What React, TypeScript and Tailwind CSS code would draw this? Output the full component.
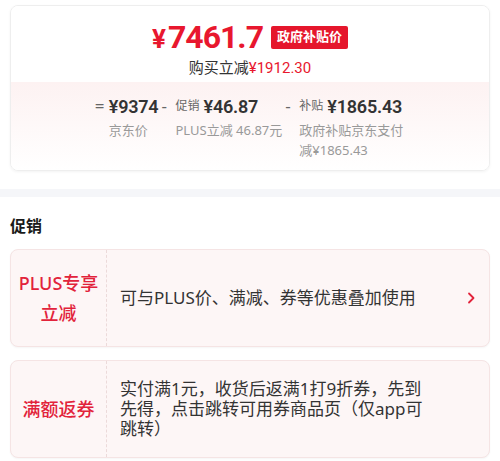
import React from "react";

const cjk = { fontFamily: '"Noto Sans", "Noto Sans CJK SC", sans-serif' };
const num = { fontFamily: 'Roboto, "Noto Sans CJK SC", sans-serif' };

// 价格明细里的一列
const PriceCol = ({ sign, tag, value, label, wide }: { sign: string; tag?: string; value: string; label: string; wide?: boolean }) => (
  <div className="flex items-start">
    <span className="h-[24px] leading-[24px] text-[17px] text-[#666] w-[14px] shrink-0">{sign}</span>
    <div className={wide ? "max-w-[106px]" : ""}>
      <div className="h-[24px] flex items-center whitespace-nowrap">
        {tag && <span className="text-[12px] text-[#666] mr-[4px]">{tag}</span>}
        <span className="text-[18px] font-semibold tracking-[-0.2px] text-[#333]" style={num}>{value}</span>
      </div>
      <div className="text-[13px] leading-[20px] text-[#999] mt-[2px]">{label}</div>
    </div>
  </div>
);

export default function App() {
  return (
    <div className="w-[500px] h-[461px] bg-white overflow-hidden" style={cjk}>
      <div className="px-[10px] pt-[5px]">
        <div className="rounded-lg border border-[#eeeeee] shadow-[0_1px_3px_rgba(0,0,0,0.05)] overflow-hidden">
          <div className="pt-[13px] pb-[5px] flex flex-col items-center bg-white">
            <div className="h-[36px] flex items-center">
              <span className="text-[#e8172e] font-bold leading-none" style={num}>
                <span className="text-[26px] mr-[2px]">¥</span>
                <span className="text-[32px] tracking-[-1px]">7461.7</span>
              </span>
              <span className="ml-[8px] h-[23px] px-[6px] flex items-center bg-[#e5162c] text-white text-[13px] font-bold rounded-[2px]">
                政府补贴价
              </span>
            </div>
            <div className="h-[20px] leading-[20px] mt-[2px] text-[15px] text-[#333]">
              购买立减<span className="text-[#e8172e]" style={num}>¥1912.30</span>
            </div>
          </div>
          <div className="bg-gradient-to-b from-[#fdf2f2] to-white pt-[12px] pb-[10px] flex justify-center gap-[3px]">
            <PriceCol sign="=" value="¥9374" label="京东价" />
            <PriceCol sign="-" tag="促销" value="¥46.87" label="PLUS立减 46.87元" />
            <PriceCol sign="-" tag="补贴" value="¥1865.43" label="政府补贴京东支付减¥1865.43" wide />
          </div>
        </div>
      </div>

      <div className="mt-[18px] h-[8px] bg-[#f5f6f9]" />

      <div className="px-[10px]">
        <h3 className="mt-[17px] h-[24px] leading-[24px] text-[16px] font-bold text-[#1a1a1a]">促销</h3>

        <div className="mt-[11px] flex rounded-lg border border-[#f5e4e4] bg-[#fdf6f6] shadow-[0_1px_2px_rgba(0,0,0,0.04)]">
          <div className="w-[96px] shrink-0 py-[18px] flex items-center justify-center text-center text-[18px] leading-[30px] font-medium text-[#e2233b] border-r border-dashed border-[#ecdada]">
            PLUS专享<br />立减
          </div>
          <div className="flex-1 flex items-center pl-[13px] pr-[14px]">
            <span className="flex-1 text-[17px] text-[#333]">可与PLUS价、满减、券等优惠叠加使用</span>
            <svg width="8" height="12" viewBox="0 0 8 12" className="shrink-0">
              <polyline points="2,1.5 6.5,6 2,10.5" fill="none" stroke="#e2233b" strokeWidth="1.8" strokeLinecap="round" strokeLinejoin="round" />
            </svg>
          </div>
        </div>

        <div className="mt-[13px] flex rounded-lg border border-[#f5e4e4] bg-[#fdf6f6] shadow-[0_1px_2px_rgba(0,0,0,0.04)]">
          <div className="w-[96px] shrink-0 py-[18px] flex items-center justify-center text-[18px] leading-[30px] font-medium text-[#e2233b] border-r border-dashed border-[#ecdada]">
            满额返券
          </div>
          <div className="flex-1 flex items-center pl-[13px] py-[18px]">
            <span className="w-[308px] text-[17px] leading-[20px] text-[#333]">
              实付满1元，收货后返满1打9折券，先到先得，点击跳转可用券商品页（仅app可跳转）
            </span>
          </div>
        </div>
      </div>
    </div>
  );
}
